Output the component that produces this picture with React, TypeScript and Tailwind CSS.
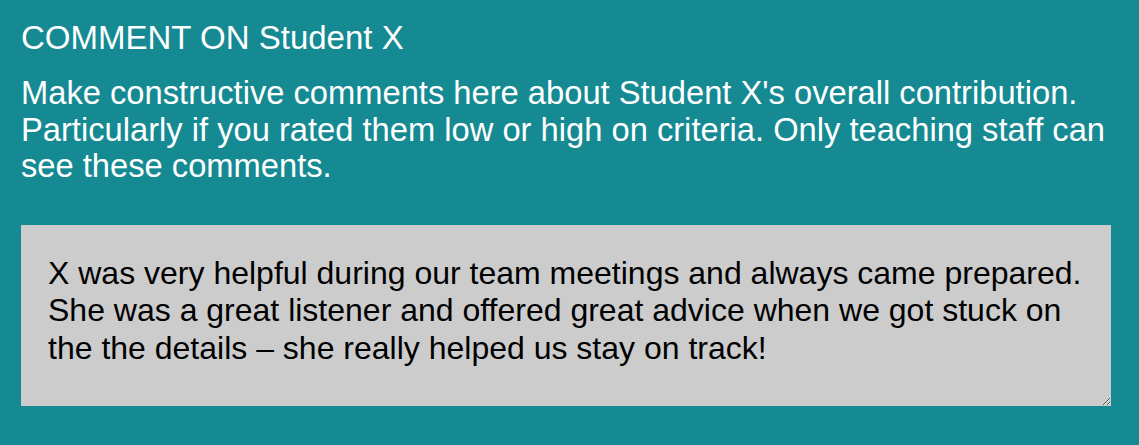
import React from 'react';

const comment =
  'X was very helpful during our team meetings and always came prepared. She was a great listener and offered great advice when we got stuck on the the details \u2013 she really helped us stay on track!';

export default function App() {
  return (
    <div className="min-h-[445px] w-full bg-[#158a92] px-[21px] pt-[20px] font-['Liberation_Sans',Arial,sans-serif] text-white">
      <h2 className="text-[33px] leading-[36px] font-normal">COMMENT ON Student X</h2>
      <p className="mt-[19px] text-[32.7px] leading-[36.5px]">
        Make constructive comments here about Student X's overall contribution. Particularly if you rated them low or
        high on criteria. Only teaching staff can see these comments.
      </p>
      <textarea
        defaultValue={comment}
        className="mt-[40px] block h-[181px] w-[1090px] resize-y rounded-none border-0 bg-[#cccccc] pl-[27px] pr-[20px] pt-[30px] pb-0 text-[32px] leading-[37.5px] text-black outline-none"
      />
    </div>
  );
}
